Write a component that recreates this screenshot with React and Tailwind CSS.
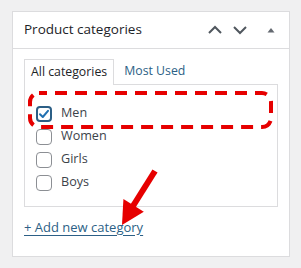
import React from "react";

function Box({ checked }) {
  return checked ? (
    <span className="flex h-[16px] w-[16px] items-center justify-center rounded-[4px] border-2 border-[#2c5f86] bg-white">
      <svg width="12" height="12" viewBox="0 0 12 12">
        <path d="M2 6.2 L4.8 9 L10 2.8" fill="none" stroke="#2271b1" strokeWidth="2" strokeLinecap="round" strokeLinejoin="round" />
      </svg>
    </span>
  ) : (
    <span className="block h-[16px] w-[16px] rounded-[4px] border border-[#8c8f94] bg-white" />
  );
}

export default function App() {
  const items = [
    { label: "Men", checked: true },
    { label: "Women" },
    { label: "Girls" },
    { label: "Boys" },
  ];
  return (
    <div
      className="relative h-[268px] w-[301px] bg-[#f0f0f1] pl-[12px] pr-[11px] pt-[11px]"
      style={{ fontFamily: '"Open Sans", "Noto Sans", sans-serif' }}
    >
      <div className="h-[246px] border border-[#dcdcde] bg-white">
        <div className="flex h-[37px] items-center border-b border-[#dcdcde] pl-[11px] pr-[14px]">
          <span className="text-[13.5px] leading-none text-[#1d2327]">Product categories</span>
          <div className="ml-auto flex items-center">
            <svg width="16" height="10" viewBox="0 0 16 10" className="mr-[9px]">
              <path d="M2 8 L8 2 L14 8" fill="none" stroke="#50575e" strokeWidth="2" />
            </svg>
            <svg width="16" height="10" viewBox="0 0 16 10" className="mr-[19px]">
              <path d="M2 2 L8 8 L14 2" fill="none" stroke="#50575e" strokeWidth="2" />
            </svg>
            <svg width="8" height="6" viewBox="0 0 8 6">
              <path d="M0.5 5.5 L4 1 L7.5 5.5 Z" fill="#646970" />
            </svg>
          </div>
        </div>
        <div className="px-[11px] pt-[9px]">
          <div className="flex items-end text-[12.3px] leading-none">
            <div className="relative z-10 -mb-px flex h-[26px] items-center border border-b-0 border-[#dcdcde] bg-white px-[6px] text-[#1d2327]">
              All categories
            </div>
            <div className="ml-[10px] flex h-[26px] items-center text-[#2c5f86]">Most Used</div>
          </div>
          <div className="flex h-[123px] flex-col border border-[#dcdcde] pl-[11px] pt-[17px]">
            {items.map((it) => (
              <div key={it.label} className="flex h-[23px] items-center gap-[9px] text-[12.6px] text-[#3c434a]">
                <Box checked={it.checked} />
                <span className="leading-none">{it.label}</span>
              </div>
            ))}
          </div>
          <div className="mt-[11px] flex h-[18px] items-center">
            <span className="text-[13px] leading-none text-[#2c5f86] underline underline-offset-[3px]">+ Add new category</span>
          </div>
        </div>
      </div>
      <svg className="pointer-events-none absolute left-0 top-0" width="301" height="268" viewBox="0 0 301 268">
        <rect x="30" y="93" width="241" height="34" rx="9" fill="none" stroke="#e60000" strokeWidth="4" strokeDasharray="12 8" strokeDashoffset="4" />
        <line x1="155" y1="171" x2="133" y2="206" stroke="#e60000" strokeWidth="6" />
        <polygon points="122,225 123.4,198.9 143.8,211.7" fill="#e60000" />
      </svg>
    </div>
  );
}
